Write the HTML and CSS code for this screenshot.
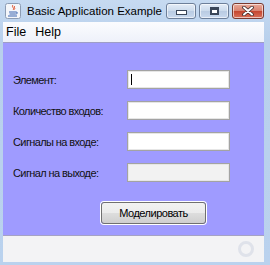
FILE: index.html
```html
<!DOCTYPE html>
<html lang="ru">
<head>
  <meta charset="UTF-8">
  <title>Basic Application Example</title>
  <link rel="stylesheet" href="styles.css">
</head>
<body>
  <div class="window">
    <div class="titlebar">
      <svg class="app-icon" width="16" height="16" viewBox="0 0 16 16">
        <rect x="0.5" y="0.5" width="15" height="15" rx="2" fill="#f4f6fa" stroke="#8d9db4"/>
        <path d="M8 2 C6 4 10 5 8 7 M9.5 3 C8.5 4.5 10.5 5 9.5 6.5" stroke="#e0502a" stroke-width="1" fill="none"/>
        <path d="M4 9 H11 M4.5 11 H10.5 M3 13 H12" stroke="#3a64b0" stroke-width="1.2"/>
        <path d="M11 9 C13 9 13 11 10.5 11" stroke="#3a64b0" fill="none"/>
      </svg>
      <span class="title">Basic Application Example</span>
      <div class="controls">
        <div class="btn-ctl"><span class="ico-min"></span></div>
        <div class="btn-ctl"><span class="ico-max"></span></div>
        <div class="btn-ctl close">
          <svg width="14" height="10" viewBox="0 0 14 10">
            <path d="M3 1.5 L11 8.5 M11 1.5 L3 8.5" stroke="#3a2a2a" stroke-width="3.6" stroke-linecap="round"/>
            <path d="M3 1.5 L11 8.5 M11 1.5 L3 8.5" stroke="#ffffff" stroke-width="2" stroke-linecap="round"/>
          </svg>
        </div>
      </div>
    </div>

    <div class="client">
      <div class="menubar">
        <span class="menu">File</span>
        <span class="menu">Help</span>
      </div>

      <div class="content">
        <div class="form">
          <label class="lbl">Элемент:</label>
          <div class="field"><span class="caret"></span></div>
          <label class="lbl">Количество входов:</label>
          <div class="field"></div>
          <label class="lbl">Сигналы на входе:</label>
          <div class="field"></div>
          <label class="lbl">Сигнал на выходе:</label>
          <div class="field readonly"></div>
        </div>
        <div class="actions">
          <button class="run">Моделировать</button>
        </div>
      </div>

      <div class="status">
        <span class="busy"></span>
      </div>
    </div>
  </div>
</body>
</html>
```

FILE: styles.css
```css
body {
  margin: 0;
  padding: 0;
  background: #bcd3ee;
}

.window {
  width: 270px;
  height: 265px;
  display: flex;
  flex-direction: column;
  box-sizing: border-box;
  padding: 0 6px 3px 3px;
  background: linear-gradient(#c6daf1, #b8d0ec 40px, #bad2ee);
}

.titlebar {
  height: 22px;
  display: flex;
  align-items: center;
  flex-shrink: 0;
}

.app-icon {
  margin: 0 6px 0 2px;
}

.title {
  font-family: "Liberation Sans", Arial, sans-serif;
  font-size: 11.5px;
  color: #000;
  flex: 1;
  white-space: nowrap;
}

.controls {
  display: flex;
  gap: 3px;
  align-self: flex-start;
  margin-top: 3px;
}

.btn-ctl {
  width: 30px;
  height: 16px;
  box-sizing: border-box;
  border: 1px solid #6d7f99;
  border-radius: 3px;
  background: linear-gradient(#e3ecf7, #cbdaec 50%, #b9cbe2 51%, #c9d9ee);
  box-shadow: inset 0 0 0 1px rgba(255,255,255,0.6);
  display: flex;
  align-items: center;
  justify-content: center;
}

.btn-ctl.close {
  width: 32px;
  border-color: #7a3a30;
  background: linear-gradient(#e9a999, #d8826f 50%, #c4452f 51%, #d9705a);
}

.ico-min {
  width: 9px;
  height: 3px;
  margin-top: 3px;
  border: 1px solid #3a4658;
  background: #fff;
}

.ico-max {
  width: 7px;
  height: 5px;
  border: 1px solid #3a4658;
  border-top-width: 2px;
  background: #fff;
  box-shadow: inset 0 0 0 1px #3a4658;
}

.client {
  flex: 1;
  display: flex;
  flex-direction: column;
  background: #f3f3f5;
}

.menubar {
  height: 20px;
  display: flex;
  align-items: center;
  border-bottom: 1px solid #9e9ec6;
  background: linear-gradient(#fbfcfe, #eef1fa);
  font-family: "Liberation Sans", Arial, sans-serif;
  font-size: 12.5px;
  color: #000;
}

.menu {
  padding: 0 3px;
  margin-right: 3px;
}

.content {
  flex: 1;
  background: #9f9bff;
  padding: 27px 0 0 10px;
  border-bottom: 1px solid #a5a2c4;
}

.form {
  display: grid;
  grid-template-columns: 114px 103px;
  row-gap: 12px;
  align-items: center;
}

.lbl {
  font-family: "Liberation Sans", Arial, sans-serif;
  font-size: 11px;
  letter-spacing: -0.6px;
  color: #111;
}

.field {
  height: 19px;
  box-sizing: border-box;
  border: 1px solid #a3a3a3;
  box-shadow: inset 0 0 0 1px #e6e6e6;
  background: #fff;
  position: relative;
}

.field.readonly {
  background: #f2f2f2;
}

.caret {
  position: absolute;
  left: 3px;
  top: 3px;
  width: 1px;
  height: 11px;
  background: #000;
}

.actions {
  padding: 20px 0 0 88px;
}

.run {
  width: 105px;
  height: 22px;
  border: 1px solid #707070;
  border-radius: 3px;
  background: linear-gradient(#f2f2f2, #ebebeb 50%, #dddddd 51%, #cfcfcf);
  box-shadow: 0 0 0 1px #fff;
  font-family: "Liberation Sans", Arial, sans-serif;
  font-size: 11px;
  letter-spacing: -0.5px;
  color: #000;
  padding: 0;
}

.status {
  height: 26px;
  display: flex;
  align-items: center;
  justify-content: flex-end;
  padding-right: 10px;
}

.busy {
  width: 10px;
  height: 10px;
  border: 3px solid #dfe2ea;
  border-radius: 50%;
}
```
